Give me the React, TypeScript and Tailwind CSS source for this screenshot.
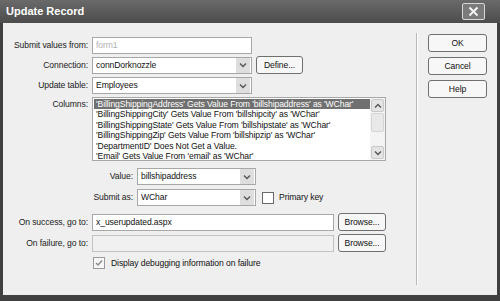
import { ReactNode } from "react";

const font = { fontFamily: '"Liberation Sans", Arial, sans-serif' };

function Arrow() {
  return (
    <span className="flex h-full w-[14px] items-center justify-center bg-[#dedede]">
      <svg width="8" height="6" viewBox="0 0 8 6">
        <path d="M1 1.5 L4 4.5 L7 1.5" fill="none" stroke="#555" strokeWidth="1.4" />
      </svg>
    </span>
  );
}

function Select({ value, className, disabled }: { value: string; className: string; disabled?: boolean }) {
  return (
    <div className={`flex h-[17px] items-center border border-[#a7a7a7] bg-white pl-[3px] pr-px ${className}`}>
      <span className={`flex-1 truncate ${disabled ? "text-[#b0b0b0]" : "text-[#111]"}`}>{value}</span>
      {disabled ? <span className="w-[14px]" /> : <Arrow />}
    </div>
  );
}

function Button({ children, className }: { children: ReactNode; className: string }) {
  return (
    <div className={`flex h-[18px] items-center justify-center rounded-[3px] border border-[#6f6f6f] bg-[#f7f7f7] text-[#111] ${className}`}>
      {children}
    </div>
  );
}

function Label({ children, className }: { children: ReactNode; className: string }) {
  return <div className={`shrink-0 whitespace-nowrap pr-[4px] text-right text-[#222] ${className}`}>{children}</div>;
}

const columns = [
  "'BillingShippingAddress' Gets Value From 'billshipaddress' as 'WChar'",
  "'BillingShippingCity' Gets Value From 'billshipcity' as 'WChar'",
  "'BillingShippingState' Gets Value From 'billshipstate' as 'WChar'",
  "'BillingShippingZip' Gets Value From 'billshipzip' as 'WChar'",
  "'DepartmentID' Does Not Get a Value.",
  "'Email' Gets Value From 'email' as 'WChar'",
];

export default function App() {
  return (
    <div className="flex h-[301px] w-[500px] flex-col bg-[#404040] text-[8.6px] tracking-[-0.1px]" style={font}>
      <div className="flex h-[23px] shrink-0 items-center justify-between bg-gradient-to-b from-[#6a6a6a] to-[#4c4c4c] pl-[6px] pr-[15px]">
        <span className="text-[11px] font-bold tracking-normal text-white">Update Record</span>
        <span className="flex h-[17px] w-[23px] items-center justify-center rounded-[2px] border border-[#d8d8d8] bg-[#7a7a7a]">
          <svg width="11" height="11" viewBox="0 0 11 11">
            <path d="M1.5 1.5 L9.5 9.5 M9.5 1.5 L1.5 9.5" stroke="#f4f4f4" strokeWidth="2" />
          </svg>
        </span>
      </div>
      <div className="mx-[3px] mb-[6px] flex flex-1 bg-[#efefef]">
        <div className="w-[413px] shrink-0 pt-[14px]">
          <div className="flex items-center">
            <Label className="w-[89px]">Submit values from:</Label>
            <Select value="form1" className="w-[160px]" disabled />
          </div>
          <div className="mt-[2px] flex items-center">
            <Label className="w-[89px]">Connection:</Label>
            <Select value="connDorknozzle" className="w-[160px]" />
            <Button className="ml-[4px] w-[47px]">Define...</Button>
          </div>
          <div className="mt-[3px] flex items-center">
            <Label className="w-[89px]">Update table:</Label>
            <Select value="Employees" className="w-[160px]" />
          </div>
          <div className="mt-[3px] flex items-start">
            <Label className="w-[89px] pt-[1px]">Columns:</Label>
            <div className="flex h-[64px] w-[294px] border border-[#a7a7a7] bg-white">
              <div className="flex-1 overflow-hidden pl-[1px] pt-[1px]">
                {columns.map((c, i) => (
                  <div
                    key={c}
                    className={`h-[10.4px] whitespace-nowrap pl-[2px] leading-[10.4px] ${i === 0 ? "bg-[#707070] text-white" : "text-[#111]"}`}
                  >
                    {c}
                  </div>
                ))}
              </div>
              <div className="flex w-[15px] flex-col bg-[#f4f4f4] p-px">
                <div className="flex h-[13px] items-center justify-center rounded-[2px] border border-[#c8c8c8] bg-[#e4e4e4]">
                  <svg width="8" height="6" viewBox="0 0 8 6">
                    <path d="M1 4.5 L4 1.5 L7 4.5" fill="none" stroke="#555" strokeWidth="1.4" />
                  </svg>
                </div>
                <div className="mt-px h-[19px] rounded-[2px] border border-[#d4d4d4] bg-[#e8e8e8]" />
                <div className="flex-1" />
                <div className="flex h-[13px] items-center justify-center rounded-[2px] border border-[#c8c8c8] bg-[#e4e4e4]">
                  <svg width="8" height="6" viewBox="0 0 8 6">
                    <path d="M1 1.5 L4 4.5 L7 1.5" fill="none" stroke="#555" strokeWidth="1.4" />
                  </svg>
                </div>
              </div>
            </div>
          </div>
          <div className="mt-[7px] flex items-center">
            <Label className="w-[134px]">Value:</Label>
            <Select value="billshipaddress" className="w-[119px]" />
          </div>
          <div className="mt-[4px] flex items-center">
            <Label className="w-[134px]">Submit as:</Label>
            <Select value="WChar" className="w-[119px]" />
            <span className="ml-[6px] h-[12px] w-[12px] border border-[#6a6a6a] bg-white" />
            <span className="ml-[5px] text-[#111]">Primary key</span>
          </div>
          <div className="mt-[7px] flex items-center">
            <Label className="w-[89px]">On success, go to:</Label>
            <div className="flex h-[17px] w-[242px] items-center border border-[#a7a7a7] bg-white pl-[3px] text-[#111]">
              x_userupdated.aspx
            </div>
            <Button className="ml-[4px] w-[48px]">Browse...</Button>
          </div>
          <div className="mt-[3px] flex items-center">
            <Label className="w-[89px]">On failure, go to:</Label>
            <div className="h-[17px] w-[242px] border border-[#c2c2c2] bg-[#f0f0f0]" />
            <Button className="ml-[4px] w-[48px]">Browse...</Button>
          </div>
          <div className="ml-[90px] mt-[5px] flex items-center">
            <span className="flex h-[12px] w-[12px] items-center justify-center border border-[#9a9a9a] bg-[#f7f7f7]">
              <svg width="8" height="8" viewBox="0 0 8 8">
                <path d="M1 4 L3 6 L7 1.5" fill="none" stroke="#8a8a8a" strokeWidth="1.4" />
              </svg>
            </span>
            <span className="ml-[6px] text-[#111]">Display debugging information on failure</span>
          </div>
        </div>
        <div className="mt-[10px] mb-[10px] w-[2px] border-l border-[#b8b8b8] bg-white" />
        <div className="flex flex-col gap-[5px] pl-[10px] pt-[11px]">
          <Button className="w-[59px]">OK</Button>
          <Button className="w-[59px]">Cancel</Button>
          <Button className="w-[59px]">Help</Button>
        </div>
      </div>
    </div>
  );
}
